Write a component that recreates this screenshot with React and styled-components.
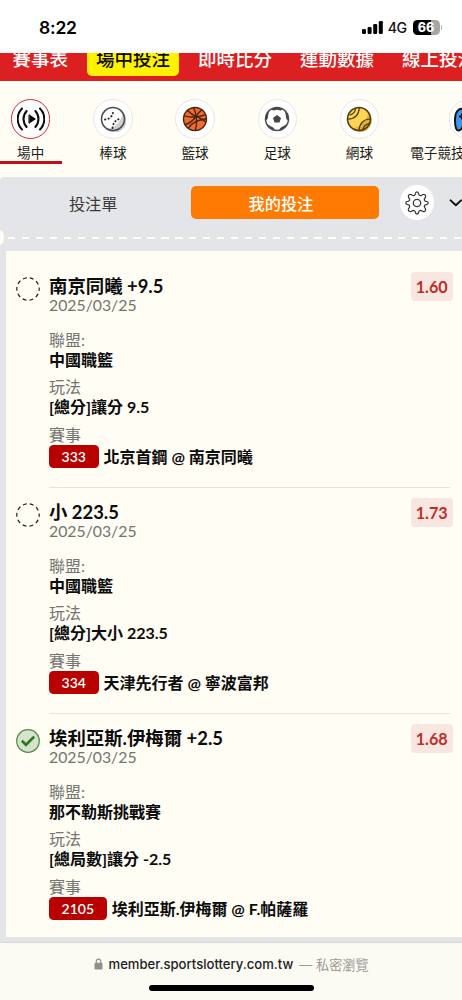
import React from "react";
import styled, { createGlobalStyle, css } from "styled-components";

const GlobalStyle = createGlobalStyle`
  *, *::before, *::after { box-sizing: border-box; }
  body {
    margin: 0;
    background: #fffdf4;
    font-family: Lato, "Noto Sans CJK TC", sans-serif;
    color: #0c0c0c;
    overflow: hidden;
  }
`;

const Screen = styled.div`
  width: 462px;
  height: 1000px;
  display: flex;
  flex-direction: column;
  overflow: hidden;
  background: #fffdf4;
`;

const StatusBar = styled.header`
  flex: none;
  height: 53px;
  padding: 2px 20px 0 39px;
  display: flex;
  align-items: center;
  background: #fff;
  font-family: Inter, sans-serif;
`;

const Clock = styled.span`
  font-size: 17.5px;
  font-weight: 600;
  letter-spacing: -0.2px;
  margin-right: auto;
  color: #000;
`;

const Network = styled.span`
  font-size: 14.2px;
  font-weight: 500;
  letter-spacing: -0.6px;
  margin: 0 6px 0 5px;
  color: #111;
`;

const Battery = styled.span`
  width: 27px;
  height: 15px;
  border-radius: 4.5px;
  background: linear-gradient(90deg, #000 68%, #a6a6a6 68%);
  color: #fff;
  font-size: 12.5px;
  font-weight: 800;
  line-height: 15px;
  text-align: center;
`;

const BatteryTip = styled.span`
  width: 1.5px;
  height: 5px;
  margin-left: 1px;
  border-radius: 0 2px 2px 0;
  background: #b4b4b4;
`;

const MainNav = styled.nav`
  flex: none;
  height: 28px;
  padding: 0 0 5.4px 3.4px;
  display: flex;
  align-items: flex-end;
  gap: 9.6px;
  overflow: hidden;
  background: #dc1f21;
`;

const NavTab = styled.a`
  flex: none;
  padding: 0 9.2px;
  height: 34px;
  line-height: 34px;
  border-radius: 5px;
  font-size: 18.5px;
  font-weight: 500;
  color: ${(p) => (p.$active ? "#0c0c0c" : "#fff")};
  background: ${(p) => (p.$active ? "#fff200" : "transparent")};
`;

const SportsBar = styled.div`
  flex: none;
  height: 96px;
  margin-left: -0.7px;
  display: flex;
  gap: 19.4px;
  overflow: hidden;
`;

const Sport = styled.div`
  flex: none;
  width: ${(p) => p.$width || 62.8}px;
  height: 82.8px;
  padding-top: 18px;
  display: flex;
  flex-direction: column;
  align-items: center;
  border-bottom: 3.5px solid ${(p) => (p.$active ? "#bd1218" : "transparent")};
`;

const SportDisc = styled.span`
  width: 39.5px;
  height: 39.5px;
  border-radius: 50%;
  border: 1.4px solid ${(p) => (p.$active ? "#cf2c35" : "#e7e7ea")};
  background: #fff;
  display: flex;
  flex: none;
  align-items: center;
  justify-content: center;
`;

const SportLabel = styled.span`
  margin-top: 4.6px;
  font-size: 13.6px;
  line-height: 20px;
  white-space: nowrap;
  color: #1c1c1c;
  ${(p) => p.$start && css`align-self: flex-start;`}
`;

const SlipPanel = styled.section`
  flex: none;
  height: 765px;
  padding: 9px 0 5px 6px;
  border-top-left-radius: 4px;
  background: #e4e5e8;
  overflow: hidden;
`;

const SlipTabs = styled.div`
  height: 33px;
  display: flex;
  align-items: center;
`;

const SlipTab = styled.button`
  flex: none;
  width: ${(p) => p.$width}px;
  height: 32.5px;
  padding: 0 ${(p) => (p.$active ? 9 : 11)}px 0 0;
  border: 0;
  border-radius: 5px;
  font-family: inherit;
  font-size: 16.2px;
  color: ${(p) => (p.$active ? "#fff" : "#3a3a3a")};
  background: ${(p) => (p.$active ? "#ff7a00" : "transparent")};
  font-weight: ${(p) => (p.$active ? 500 : 400)};
`;

const GearButton = styled.button`
  flex: none;
  width: 34.5px;
  height: 34.5px;
  margin: 0 14.5px 0 20.5px;
  padding: 0;
  border: 0;
  border-radius: 50%;
  background: #fff;
  display: flex;
  align-items: center;
  justify-content: center;
`;

const Perforation = styled.div`
  height: 32px;
  margin-left: -6px;
  padding-top: 6px;
  display: flex;
  align-items: center;
  overflow: hidden;
`;

const Notch = styled.span`
  flex: none;
  width: 4px;
  height: 15px;
  border-radius: 0 4px 4px 0 / 0 7.5px 7.5px 0;
  background: #fffdf4;
  margin: -2px 4.2px 0 0;
`;

const Dashes = styled.span`
  flex: 1;
  height: 2.4px;
  background: repeating-linear-gradient(90deg, #fffdf4 0 7.4px, transparent 7.4px 13.93px);
`;

const BetList = styled.div`
  height: 686px;
  padding-top: 11px;
  background: #fffdf4;
`;

const BetRow = styled.article`
  height: 226px;
  padding: 14px 9.5px 0 10px;
  display: flex;
  align-items: flex-start;
`;

const StatusIcon = styled.svg`
  flex: none;
  width: 24px;
  height: 24px;
  margin-top: 1px;
`;

const BetBody = styled.div`
  flex: 1;
  height: 212px;
  margin-left: 9px;
  margin-right: -39px;
  ${(p) => !p.$last && css`border-bottom: 1.4px solid #e4e3e0;`}
`;

const BetTitle = styled.h2`
  margin: 0;
  font-size: 18.4px;
  line-height: 20px;
  font-weight: 700;
  white-space: nowrap;
`;

const BetDate = styled.div`
  font-size: 15.8px;
  line-height: 18px;
  margin-bottom: 17px;
  color: #747472;
`;

const Field = styled.div`
  margin-bottom: 8px;
  &:last-child { padding-top: 1px; }
`;

const FieldLabel = styled.div`
  font-size: 16px;
  line-height: 18px;
  color: #747472;
`;

const FieldValue = styled.div`
  margin-top: 1px;
  font-size: 16px;
  line-height: 20px;
  font-weight: 700;
  white-space: nowrap;
  display: flex;
  align-items: center;
`;

const GameNo = styled.span`
  height: 23.4px;
  padding: 0 12.6px;
  margin-right: 5px;
  border-radius: 4.5px;
  background: #b80000;
  color: #fff;
  font-size: 14px;
  font-weight: 600;
  line-height: 23px;
`;

const Odds = styled.span`
  flex: none;
  width: 41.5px;
  height: 29px;
  margin-top: -4.5px;
  border-radius: 4px;
  background: #f8e7e0;
  color: #bd2f28;
  font-size: 16.2px;
  line-height: 30px;
  font-weight: 700;
  text-align: center;
`;

const AddressBar = styled.footer`
  flex: 1;
  border-top: 1px solid #d9d9d6;
  background: #fbfaf3;
  display: flex;
  flex-direction: column;
  align-items: center;
`;

const Address = styled.div`
  height: 42px;
  display: flex;
  align-items: center;
  font-family: Inter, "Noto Sans CJK TC", sans-serif;
  font-size: 13.1px;
  white-space: pre;
`;

const Domain = styled.span`
  margin: 0 6px;
  font-weight: 500;
  color: #222;
`;

const PrivateNote = styled.span`
  color: #9c9b97;
`;

const HomeIndicator = styled.div`
  width: 165px;
  height: 5.5px;
  border-radius: 3px;
  background: #000;
`;

const SignalBars = () => (
  <svg width="21" height="13" viewBox="0 0 21 13">
    <rect x="0" y="8" width="4" height="5" rx="1.2" />
    <rect x="5.6" y="6" width="4" height="7" rx="1.2" />
    <rect x="11.2" y="3" width="4" height="10" rx="1.2" />
    <rect x="16.8" y="0" width="4" height="13" rx="1.2" />
  </svg>
);

const LiveIcon = () => (
  <svg width="28" height="26" viewBox="0 0 28 26" fill="none" stroke="#0a0a0a" strokeWidth="2" strokeLinecap="round">
    <path d="M5 2.500A15 15 0 0 0 5 23.500M23 2.500A15 15 0 0 1 23 23.500" />
    <path d="M9.600 5A12 12 0 0 0 9.600 21M18.400 5A12 12 0 0 1 18.400 21" />
    <path d="M12.300 9L18.300 13L12.300 17Z" fill="#0a0a0a" strokeWidth="1" strokeLinejoin="round" />
  </svg>
);

const BaseballIcon = () => (
  <svg width="26" height="26" viewBox="0 0 26 26" fill="none">
    <circle cx="13" cy="13" r="11.400" fill="#fff" />
    <path d="M23 6A11.600 11.600 0 0 1 6 23Q20 21.500 23 6Z" fill="#cfcfd1" />
    <circle cx="13" cy="13" r="11.500" stroke="#484848" strokeWidth="1.500" />
    <path d="M5 13.500Q12.500 13 13.500 4M12.500 22Q13.500 13.500 21.800 12.500" stroke="#2a2a2a" strokeWidth="1.900" strokeLinecap="round" strokeDasharray="0.400 3.200" />
  </svg>
);

const BasketballIcon = () => (
  <svg width="26" height="26" viewBox="0 0 26 26" fill="none" stroke="#4a2416" strokeWidth="1.400">
    <circle cx="13" cy="13" r="11.500" fill="#f26b2e" />
    <path d="M2.200 9.800Q13 12.800 23.600 8.600M11.500 1.500Q16.500 12 13.500 24.400M5.500 4.500Q9.500 8.500 14.300 10.600Q20 12.500 23.800 16M20 3.800Q16.500 5.800 14 10.700Q9 17 3 18.500M6.500 21.800Q11.500 14.500 24 12.800" />
  </svg>
);

const SoccerIcon = () => (
  <svg width="26" height="26" viewBox="0 0 26 26">
    <circle cx="13" cy="13" r="11.500" fill="#fff" stroke="#505050" strokeWidth="1.500" />
    <g fill="#464646">
      <path d="M13 9L17 11.900L15.500 16.500H10.500L9 11.900Z" />
      <path d="M7 3Q13 0 19 3L16.800 4.400L13 3.800L9.200 4.400Z" />
      <path d="M21 4.500Q25.500 9 24.800 15L22.400 13L21.600 8.500Z" />
      <path d="M5 4.500Q.500 9 1.200 15L3.600 13L4.400 8.500Z" />
      <path d="M23.500 17.500Q20.500 23.500 14.800 24.800L16.500 21.700L20.500 19.600Z" />
      <path d="M2.500 17.500Q5.500 23.500 11.200 24.800L9.500 21.700L5.500 19.600Z" />
    </g>
  </svg>
);

const TennisIcon = () => (
  <svg width="26" height="26" viewBox="0 0 26 26" fill="none">
    <circle cx="13" cy="13" r="11.400" fill="#fed550" />
    <path d="M22.500 6.500A11.400 11.400 0 0 1 6 22.500Q19 20 22.500 6.500Z" fill="#dfb03a" />
    <g stroke="#4d3c10" strokeWidth="1.500">
      <circle cx="13" cy="13" r="11.500" />
      <path d="M2 13.200Q13 12.500 13.200 1.500M3.500 9.200Q8.800 7.800 9.600 2.600M24.200 13Q13.800 13.500 13 24.500M23.400 17.300Q18 18.500 16.800 23.500" strokeWidth="1.250" />
    </g>
  </svg>
);

const EsportsIcon = () => (
  <svg width="30" height="26" viewBox="0 0 30 26">
    <path d="M5 3.500Q8 2 11 4H19Q22 2 25 3.500Q29 6 29 14Q29 24.500 25.500 24.500Q22 24.500 20.500 18H9.500Q8 24.500 4.500 24.500Q1 24.500 1 14Q1 6 5 3.500Z" fill="#3e95f0" stroke="#111" strokeWidth="2" />
    <path d="M8 7.500V13.500M5 10.500H11" stroke="#111" strokeWidth="1.800" />
    <circle cx="22" cy="10.500" r="1.600" />
  </svg>
);

const GearIcon = () => (
  <svg width="26" height="26" viewBox="0 0 26 26" fill="none" stroke="#3a3a3a" strokeWidth="1.300" strokeLinejoin="round">
    <circle cx="13" cy="13" r="3.700" />
    <path d="M11.400 3.900Q11.500 1.800 13 1.800T14.600 3.900Q15 5.600 16.500 5.700Q17.300 5.700 18.500 4.700Q20 3.800 21.100 4.900T21.300 7.500Q20 9 20.400 10.200Q20.800 11.200 22.200 11.400Q24.200 11.600 24.200 13T22.200 14.600Q20.800 14.800 20.400 15.800Q20 17 21.300 18.500Q22.200 20 21.100 21.100T18.500 21.300Q17.300 20.300 16.500 20.300Q15 20.400 14.600 22.100Q14.500 24.200 13 24.200T11.400 22.100Q11 20.400 9.500 20.300Q8.700 20.300 7.500 21.300Q6 22.200 4.900 21.100T4.700 18.500Q6 17 5.600 15.800Q5.200 14.800 3.800 14.600Q1.800 14.400 1.800 13T3.800 11.400Q5.200 11.200 5.600 10.200Q6 9 4.700 7.500Q3.800 6 4.900 4.900T7.500 4.700Q8.700 5.700 9.500 5.700Q11 5.600 11.400 3.900Z" />
  </svg>
);

const ChevronIcon = () => (
  <svg width="14" height="9" viewBox="0 0 14 9" fill="none" stroke="#111" strokeWidth="2.100" strokeLinecap="round" strokeLinejoin="round">
    <path d="M1.700 2.200L7.300 7.500L12.900 2.200" />
  </svg>
);

const LockIcon = () => (
  <svg width="9" height="12" viewBox="0 0 9 12">
    <path d="M2.300 5V3.300A2.200 2.200 0 0 1 6.700 3.300V5" fill="none" stroke="#90908d" strokeWidth="1.200" />
    <rect x="0.500" y="4.800" width="8" height="6.600" rx="1.200" fill="#90908d" />
  </svg>
);

const BetStatus = ({ settled }) => (
  <StatusIcon viewBox="0 0 24 24" fill="none">
    {settled ? (
      <>
        <circle cx="12" cy="12" r="11.300" fill="#d6e2cd" stroke="#4a8c3a" strokeWidth="1.200" />
        <path d="M5.800 11.800L10 15.800L18.200 7.600" stroke="#2c7a1c" strokeWidth="2.700" />
      </>
    ) : (
      <circle cx="12" cy="12" r="11.200" stroke="#1e1e1e" strokeWidth="1.200" strokeDasharray="3.900 3.137" strokeDashoffset="2" />
    )}
  </StatusIcon>
);

const navItems = ["賽事表", "場中投注", "即時比分", "運動數據", "線上投注"];

const sports = [
  { label: "場中", Icon: LiveIcon },
  { label: "棒球", Icon: BaseballIcon },
  { label: "籃球", Icon: BasketballIcon },
  { label: "足球", Icon: SoccerIcon },
  { label: "網球", Icon: TennisIcon },
  { label: "電子競技", Icon: EsportsIcon, width: 117 },
];

const bets = [
  { title: "南京同曦 +9.5", league: "中國職籃", play: "[總分]讓分 9.5", no: "333", game: "北京首鋼 @ 南京同曦", odds: "1.60" },
  { title: "小 223.5", league: "中國職籃", play: "[總分]大小 223.5", no: "334", game: "天津先行者 @ 寧波富邦", odds: "1.73" },
  { title: "埃利亞斯.伊梅爾 +2.5", league: "那不勒斯挑戰賽", play: "[總局數]讓分 -2.5", no: "2105", game: "埃利亞斯.伊梅爾 @ F.帕薩羅", odds: "1.68", settled: true },
];

export default function App() {
  return (
    <Screen>
      <GlobalStyle />
      <StatusBar>
        <Clock>8:22</Clock>
        <SignalBars />
        <Network>4G</Network>
        <Battery>66</Battery>
        <BatteryTip />
      </StatusBar>
      <MainNav>
        {navItems.map((t, i) => (
          <NavTab key={t} $active={i === 1}>{t}</NavTab>
        ))}
      </MainNav>
      <SportsBar>
        {sports.map(({ label, Icon, width }, i) => (
          <Sport key={label} $active={i === 0} $width={width}>
            <SportDisc $active={i === 0}><Icon /></SportDisc>
            <SportLabel $start={Boolean(width)}>{label}</SportLabel>
          </Sport>
        ))}
      </SportsBar>
      <SlipPanel>
        <SlipTabs>
          <SlipTab $width={185.4}>投注單</SlipTab>
          <SlipTab $width={188} $active>我的投注</SlipTab>
          <GearButton><GearIcon /></GearButton>
          <ChevronIcon />
        </SlipTabs>
        <Perforation>
          <Notch />
          <Dashes />
        </Perforation>
        <BetList>
          {bets.map((b, i) => (
            <BetRow key={b.no}>
              <BetStatus settled={b.settled} />
              <BetBody $last={i === bets.length - 1}>
                <BetTitle>{b.title}</BetTitle>
                <BetDate>2025/03/25</BetDate>
                <Field>
                  <FieldLabel>聯盟:</FieldLabel>
                  <FieldValue>{b.league}</FieldValue>
                </Field>
                <Field>
                  <FieldLabel>玩法</FieldLabel>
                  <FieldValue>{b.play}</FieldValue>
                </Field>
                <Field>
                  <FieldLabel>賽事</FieldLabel>
                  <FieldValue><GameNo>{b.no}</GameNo>{b.game}</FieldValue>
                </Field>
              </BetBody>
              <Odds>{b.odds}</Odds>
            </BetRow>
          ))}
        </BetList>
      </SlipPanel>
      <AddressBar>
        <Address>
          <LockIcon />
          <Domain>member.sportslottery.com.tw</Domain>
          <PrivateNote>— 私密瀏覽</PrivateNote>
        </Address>
        <HomeIndicator />
      </AddressBar>
    </Screen>
  );
}
